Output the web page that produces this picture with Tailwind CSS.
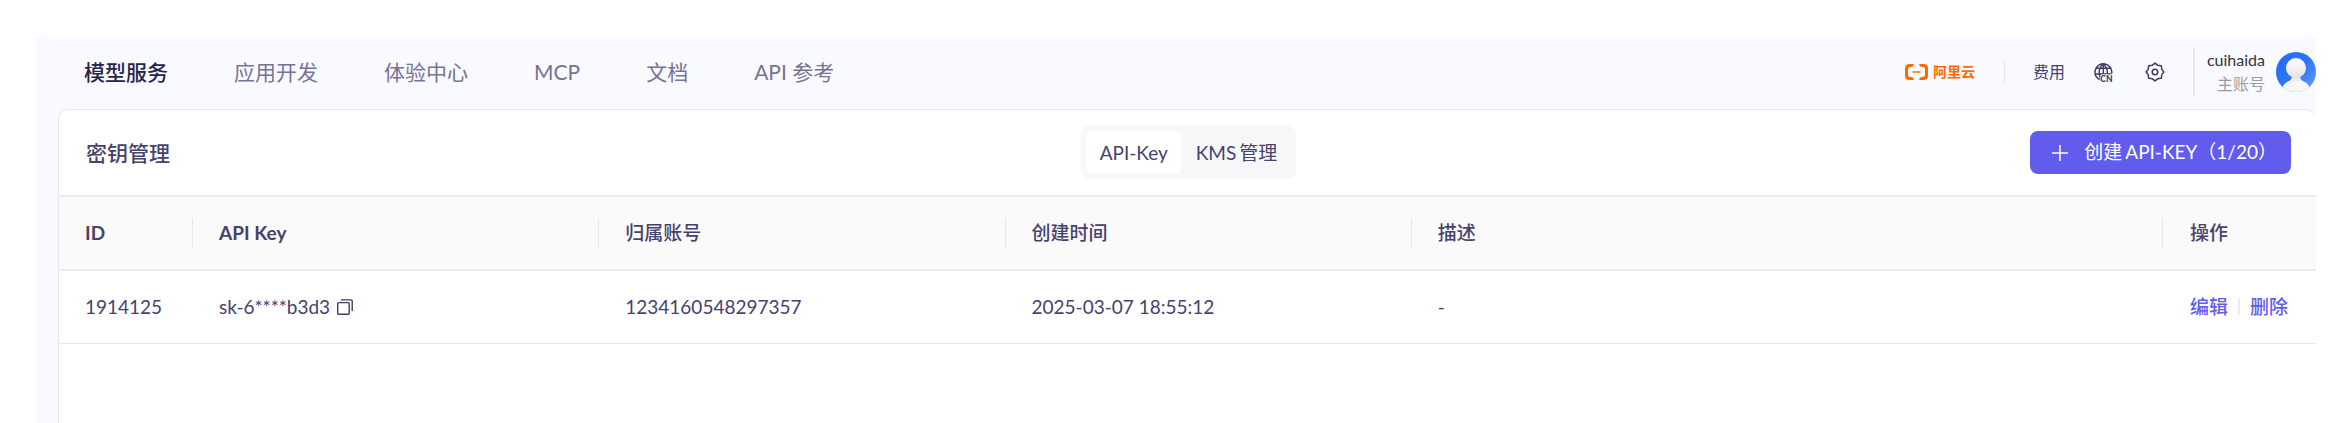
<!DOCTYPE html>
<html lang="zh-CN">
<head>
<meta charset="utf-8">
<title>密钥管理</title>
<script src="https://cdn.jsdelivr.net/npm/@tailwindcss/browser@4"></script>
</head>
<body class="bg-white font-[Lato,'Noto_Sans_CJK_SC',sans-serif] text-[#46426c]">
<div class="flex min-h-screen flex-col pt-[37px] pr-[14px] pl-9">
  <div class="flex grow flex-col overflow-hidden rounded-t bg-[#f9faff]">
    <header class="flex h-[72px] shrink-0 items-center justify-between pl-12">
      <nav class="flex items-center gap-[66px] pb-[2px] text-[21px] leading-8 whitespace-nowrap text-[#767394]">
        <a href="#" class="font-medium text-[#26244c]" aria-current="page">模型服务</a>
        <a href="#">应用开发</a>
        <a href="#">体验中心</a>
        <a href="#">MCP</a>
        <a href="#">文档</a>
        <a href="#">API 参考</a>
      </nav>
      <div class="flex items-center pb-[2px] whitespace-nowrap">
        <a href="#" class="mr-[29px] flex items-center gap-[5px] text-sm font-bold text-[#ff6a00]">
          <svg class="h-4 w-[23px]" viewBox="0 0 23 16" fill="none" aria-hidden="true"><path fill="#ff6a00" d="M9 0H4.500Q0 0 0 4.500V11.500Q0 16 4.500 16H9L8 13.500L4.500 12.800Q3 12.500 3 11V5Q3 3.500 4.500 3.200L8 2.500ZM14 0H18.500Q23 0 23 4.500V11.500Q23 16 18.500 16H14L15 13.500L18.500 12.800Q20 12.500 20 11V5Q20 3.500 18.500 3.200L15 2.500Z"/><path d="M7.500 8H15.500" stroke="#ff6a00" stroke-width="1.600"/></svg>
          阿里云
        </a>
        <span class="mr-7 h-[22px] w-px bg-[#e3e3ec]"></span>
        <a href="#" class="mr-[29px] text-base">费用</a>
        <button type="button" class="mr-8" aria-label="语言">
          <svg class="size-[19px]" viewBox="0 0 19 19" fill="none" stroke="#403c63" stroke-width="1.5" aria-hidden="true">
            <path d="M17.700 10.500A8.400 8.400 0 1 0 7 17.300M9.300 1C6.500 3.200 5.200 6 5.200 9.300C5.200 12.500 6 15.300 7.300 17.200M9.300 1C12 3.200 13.400 6 13.400 10.200M9.300 1V10.500M2.200 5.300H16.600M1 11H17.500"/>
            <text x="6.300" y="18.500" font-family="Lato" font-size="8.500" font-weight="900" fill="#403c63" stroke="#f9faff" stroke-width="1.500" paint-order="stroke">CN</text>
          </svg>
        </button>
        <button type="button" class="mr-7" aria-label="设置">
          <svg class="size-5" viewBox="0 0 20 20" fill="none" stroke="#403c63" stroke-width="1.5" stroke-linejoin="round" aria-hidden="true">
            <path d="M10 1.1L12.600 3.200L16.300 3.700L16.800 7.400L18.900 10L16.800 12.600L16.300 16.300L12.600 16.800L10 18.900L7.400 16.800L3.700 16.300L3.200 12.600L1.100 10L3.200 7.400L3.700 3.700L7.400 3.200Z"/>
            <circle cx="10" cy="10" r="2.800"/>
          </svg>
        </button>
        <div class="flex h-12 items-center border-l-2 border-[#e6e6ea] pl-3">
          <div class="mr-[11px] flex flex-col items-end text-base leading-6">
            <span class="text-[#333333]">cuihaida</span>
            <span class="text-[#9b9b9b]">主账号</span>
          </div>
          <svg class="size-10" viewBox="0 0 40 40" role="img" aria-label="cuihaida">
            <defs>
              <linearGradient id="sky" x1="0" y1="0" x2="1" y2="1"><stop offset="0" stop-color="#2468f2"/><stop offset=".5" stop-color="#2d76f3"/><stop offset="1" stop-color="#6a9df8"/></linearGradient>
              <linearGradient id="head" x1="0" y1="0" x2="0" y2="1"><stop offset="0" stop-color="#ffffff"/><stop offset="1" stop-color="#e3e3e3"/></linearGradient>
              <linearGradient id="torso" x1="0" y1="0" x2="0" y2="1"><stop offset="0" stop-color="#e2e2e2"/><stop offset=".5" stop-color="#f7f7f7"/></linearGradient>
              <clipPath id="disc"><circle cx="20" cy="20" r="20"/></clipPath>
            </defs>
            <g clip-path="url(#disc)">
              <rect width="40" height="40" fill="url(#sky)"/>
              <path d="M16 23H24C24 28 26 28.500 29 30C32.500 32 34 34.500 34 40H6C6 34.500 7.500 32 11 30C14 28.500 16 28 16 23Z" fill="url(#torso)"/>
              <circle cx="20" cy="16" r="10" fill="url(#head)"/>
            </g>
          </svg>
        </div>
      </div>
    </header>
    <main class="ml-[22px] grow overflow-hidden rounded-t-[10px] border border-b-0 border-r-0 border-[#e6e6f0] bg-white">
      <div class="grid h-[87px] grid-cols-3 items-center border-b-2 border-[#ebebf3] pr-[25px] pl-[27px] whitespace-nowrap">
        <h1 class="text-[21px] leading-8 font-medium">密钥管理</h1>
        <div class="flex justify-self-center rounded-lg bg-[#f7f7fa] p-[5px] text-[19px] leading-[43px]">
          <button type="button" class="rounded-md bg-white px-[14px]" aria-pressed="true">API-Key</button>
          <button type="button" class="px-[14px]" aria-pressed="false">KMS<span class="ml-[3px]">管理</span></button>
        </div>
        <button type="button" class="flex h-[43px] items-center gap-4 justify-self-end rounded-lg bg-[#615ced] pr-[14px] pl-[22px] text-[19px] text-white">
          <svg class="size-4" viewBox="0 0 16 16" stroke="#fff" stroke-width="1.5" aria-hidden="true"><path d="M8 0V16M0 8H16"/></svg>
          <span>创建<span class="ml-[3px]">API-KEY（1/20）</span></span>
        </button>
      </div>
      <table class="w-full table-fixed text-left text-[19px] leading-[30px]">
        <colgroup><col class="w-[134px]"><col class="w-[18%]"><col class="w-[18%]"><col class="w-[18%]"><col><col class="w-[153px]"></colgroup>
        <thead class="border-b-2 border-[#ebebf3] bg-[#fafafa]">
          <tr class="h-[73px]">
            <th scope="col" class="font-bold"><div class="border-r border-[#e6e6f0] pl-[26px]">ID</div></th>
            <th scope="col" class="font-bold"><div class="border-r border-[#e6e6f0] pl-[26px]">API Key</div></th>
            <th scope="col" class="font-medium"><div class="border-r border-[#e6e6f0] pl-[26px]">归属账号</div></th>
            <th scope="col" class="font-medium"><div class="border-r border-[#e6e6f0] pl-[26px]">创建时间</div></th>
            <th scope="col" class="font-medium"><div class="border-r border-[#e6e6f0] pl-[26px]">描述</div></th>
            <th scope="col" class="pl-[27px] font-medium">操作</th>
          </tr>
        </thead>
        <tbody>
          <tr class="h-[73px] border-b border-[#e6e6f0]">
            <td class="pl-[26px]">1914125</td>
            <td class="pl-[26px]">
              <div class="flex items-center gap-[7px]">sk-6****b3d3
                <button type="button" aria-label="复制">
                  <svg class="size-4" viewBox="0 0 16 16" fill="none" stroke="#403c63" stroke-width="1.400" aria-hidden="true"><rect x=".7" y="3.600" width="11.500" height="11.700" rx="1"/><path d="M3.800 .9H14Q15.200 .9 15.200 2.100V12"/></svg>
                </button>
              </div>
            </td>
            <td class="pl-[26px]">1234160548297357</td>
            <td class="pl-[26px]">2025-03-07 18:55:12</td>
            <td class="pl-[26px]">-</td>
            <td class="pl-[27px]">
              <div class="flex items-center gap-[10px] whitespace-nowrap text-[#615ced]">
                <button type="button" class="font-medium">编辑</button><span class="h-[17px] w-[2px] bg-[#ebebf3]"></span><button type="button" class="font-medium">删除</button>
              </div>
            </td>
          </tr>
        </tbody>
      </table>
    </main>
  </div>
</div>
</body>
</html>
